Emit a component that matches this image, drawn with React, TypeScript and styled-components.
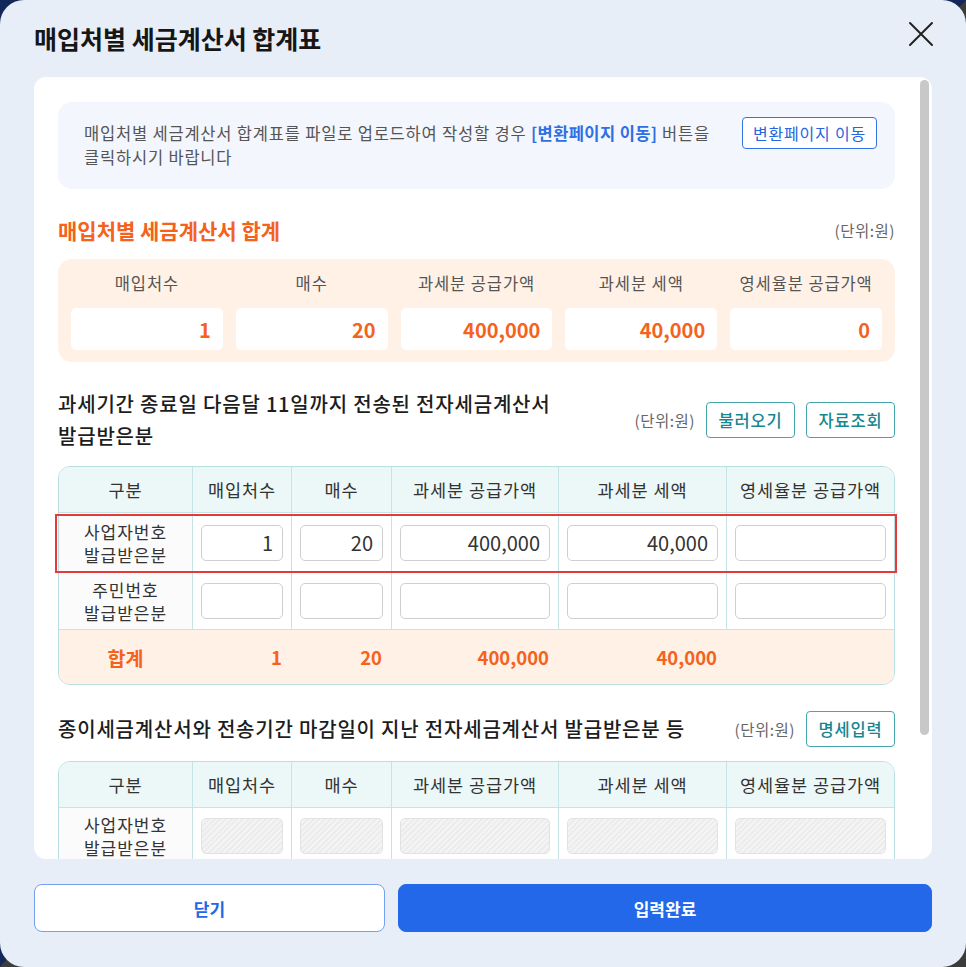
import React from "react";
import styled, { createGlobalStyle } from "styled-components";

const GlobalStyle = createGlobalStyle`
  * { box-sizing: border-box; }
  html, body {
    margin: 0;
    padding: 0;
    background: linear-gradient(135deg, #12275a 0%, #12275a 50%, #3c3c3c 50%, #3c3c3c 100%);
    font-family: "Noto Sans CJK KR", "Noto Sans", sans-serif;
    word-break: keep-all;
  }
`;

const columns = ["구분", "매입처수", "매수", "과세분 공급가액", "과세분 세액", "영세율분 공급가액"];

interface Row {
  label: [string, string];
  values: string[];
  highlight?: boolean;
}

const issuedRows: Row[] = [
  { label: ["사업자번호", "발급받은분"], values: ["1", "20", "400,000", "40,000", ""], highlight: true },
  { label: ["주민번호", "발급받은분"], values: ["", "", "", "", ""] },
];

const summary = [
  { title: "매입처수", value: "1" },
  { title: "매수", value: "20" },
  { title: "과세분 공급가액", value: "400,000" },
  { title: "과세분 세액", value: "40,000" },
  { title: "영세율분 공급가액", value: "0" },
];

const App: React.FC = () => {
  return (
    <>
      <GlobalStyle />
      <Modal>
        <ModalHeader>
          <ModalTitle>매입처별 세금계산서 합계표</ModalTitle>
          <CloseButton aria-label="닫기">
            <svg width="26" height="26" viewBox="0 0 26 26">
              <path d="M2 2 L24 24 M24 2 L2 24" stroke="#222" strokeWidth="2" strokeLinecap="round" />
            </svg>
          </CloseButton>
        </ModalHeader>

        <Panel>
          <PanelScroll>
            <InfoBox>
              <InfoText>
                매입처별 세금계산서 합계표를 파일로 업로드하여 작성할 경우 <InfoLink>[변환페이지 이동]</InfoLink> 버튼을
                클릭하시기 바랍니다
              </InfoText>
              <OutlineButton>변환페이지 이동</OutlineButton>
            </InfoBox>

            <SectionHead>
              <SectionTitle tone="orange">매입처별 세금계산서 합계</SectionTitle>
              <Unit>(단위:원)</Unit>
            </SectionHead>

            <SummaryBox>
              {summary.map((s) => (
                <SummaryCol key={s.title}>
                  <SummaryLabel>{s.title}</SummaryLabel>
                  <SummaryValue>{s.value}</SummaryValue>
                </SummaryCol>
              ))}
            </SummaryBox>

            <SectionHead spaced>
              <SectionTitle>과세기간 종료일 다음달 11일까지 전송된 전자세금계산서 발급받은분</SectionTitle>
              <HeadActions>
                <Unit>(단위:원)</Unit>
                <TealButton>불러오기</TealButton>
                <TealButton>자료조회</TealButton>
              </HeadActions>
            </SectionHead>

            <Table>
              <HeaderRow>
                {columns.map((c) => (
                  <HeadCell key={c}>{c}</HeadCell>
                ))}
              </HeaderRow>
              {issuedRows.map((r) => (
                <BodyRow key={r.label[0]} highlight={r.highlight}>
                  <LabelCell>
                    {r.label[0]}
                    <br />
                    {r.label[1]}
                  </LabelCell>
                  {r.values.map((v, i) => (
                    <InputCell key={i}>
                      <NumInput defaultValue={v} />
                    </InputCell>
                  ))}
                </BodyRow>
              ))}
              <TotalRow>
                <TotalLabel>합계</TotalLabel>
                <TotalValue>1</TotalValue>
                <TotalValue>20</TotalValue>
                <TotalValue>400,000</TotalValue>
                <TotalValue>40,000</TotalValue>
                <TotalValue />
              </TotalRow>
            </Table>

            <SectionHead spaced>
              <SectionTitle>종이세금계산서와 전송기간 마감일이 지난 전자세금계산서 발급받은분 등</SectionTitle>
              <HeadActions>
                <Unit>(단위:원)</Unit>
                <TealButton>명세입력</TealButton>
              </HeadActions>
            </SectionHead>

            <Table>
              <HeaderRow>
                {columns.map((c) => (
                  <HeadCell key={c}>{c}</HeadCell>
                ))}
              </HeaderRow>
              {issuedRows.map((r) => (
                <BodyRow key={r.label[0]}>
                  <LabelCell>
                    {r.label[0]}
                    <br />
                    {r.label[1]}
                  </LabelCell>
                  {r.values.map((_, i) => (
                    <InputCell key={i}>
                      <NumInput disabled />
                    </InputCell>
                  ))}
                </BodyRow>
              ))}
              <TotalRow>
                <TotalLabel>합계</TotalLabel>
                <TotalValue />
                <TotalValue />
                <TotalValue />
                <TotalValue />
                <TotalValue />
              </TotalRow>
            </Table>
          </PanelScroll>
          <ScrollThumb />
        </Panel>

        <Footer>
          <FooterButton>닫기</FooterButton>
          <FooterButton primary>입력완료</FooterButton>
        </Footer>
      </Modal>
    </>
  );
};

export default App;

const Modal = styled.div`
  width: 100%;
  height: 967px;
  background: #e8eef8;
  border-radius: 24px;
  display: flex;
  flex-direction: column;
  padding: 0 34px 35px 34px;
  overflow: hidden;
`;

const ModalHeader = styled.div`
  height: 77px;
  flex-shrink: 0;
  display: flex;
  align-items: center;
  justify-content: space-between;
`;

const ModalTitle = styled.h1`
  margin: 0;
  font-size: 25px;
  font-weight: 700;
  color: #161616;
  line-height: 1.3;
`;

const CloseButton = styled.button`
  border: none;
  background: none;
  padding: 0;
  margin: -10px -2px 0 0;
  width: 26px;
  height: 26px;
  cursor: pointer;
  display: flex;
`;

const Panel = styled.div`
  position: relative;
  flex: 1;
  min-height: 0;
  background: #fff;
  border-radius: 12px;
  overflow: hidden;
`;

const PanelScroll = styled.div`
  height: 100%;
  overflow: hidden;
  padding: 25px 37px 24px 24px;
`;

const ScrollThumb = styled.div`
  position: absolute;
  top: 3px;
  right: 3px;
  width: 9px;
  height: 655px;
  border-radius: 5px;
  background: #c8c8c8;
`;

const InfoBox = styled.div`
  display: flex;
  align-items: flex-start;
  gap: 20px;
  background: #f3f6fc;
  border-radius: 14px;
  padding: 15px 18px 20px 26px;
`;

const InfoText = styled.p`
  flex: 1;
  margin: 4px 0 0;
  font-size: 16.5px;
  letter-spacing: 0.8px;
  line-height: 24px;
  color: #555;
`;

const InfoLink = styled.span`
  color: #2e6fe3;
  font-weight: 700;
  letter-spacing: 0.4px;
`;

const OutlineButton = styled.button`
  flex-shrink: 0;
  height: 32px;
  width: 135px;
  border: 1px solid #3273e6;
  border-radius: 4px;
  background: #fff;
  color: #2566de;
  font-family: inherit;
  font-size: 16px;
  letter-spacing: 0.8px;
  padding: 0;
`;

const SectionHead = styled.div<{ spaced?: boolean }>`
  display: flex;
  align-items: center;
  justify-content: space-between;
  gap: 20px;
  margin: ${({ spaced }) => (spaced ? "26px 0 14px" : "24px 0 12px")};
`;

const SectionTitle = styled.h2<{ tone?: "orange" }>`
  flex: 1;
  margin: 0;
  font-size: ${({ tone }) => (tone ? "21px" : "20px")};
  line-height: ${({ tone }) => (tone ? "34px" : "32px")};
  font-weight: ${({ tone }) => (tone ? 700 : 500)};
  letter-spacing: ${({ tone }) => (tone ? "0" : "0.8px")};
  color: ${({ tone }) => (tone ? "#f4621c" : "#1d1d1d")};
`;

const Unit = styled.span`
  font-size: 15.5px;
  letter-spacing: 0.5px;
  color: #666;
  white-space: nowrap;
`;

const HeadActions = styled.div`
  display: flex;
  align-items: center;
  gap: 11px;
  flex-shrink: 0;
`;

const TealButton = styled.button`
  width: 89px;
  height: 36px;
  border: 1.5px solid #46a6ad;
  border-radius: 4px;
  background: #fff;
  color: #16868f;
  font-family: inherit;
  font-size: 16.5px;
  letter-spacing: 0.8px;
  font-weight: 500;
  padding: 0;
`;

const SummaryBox = styled.div`
  display: grid;
  grid-template-columns: repeat(5, 1fr);
  gap: 13px;
  background: #fff1e6;
  border-radius: 14px;
  padding: 13px 13px 12px;
`;

const SummaryCol = styled.div`
  display: flex;
  flex-direction: column;
  gap: 14px;
`;

const SummaryLabel = styled.div`
  text-align: center;
  font-size: 16.5px;
  letter-spacing: 0.9px;
  line-height: 22px;
  color: #555;
`;

const SummaryValue = styled.div`
  height: 42px;
  background: #fff;
  border-radius: 5px;
  display: flex;
  align-items: center;
  justify-content: flex-end;
  padding-right: 12px;
  font-size: 20px;
  font-weight: 700;
  color: #f4621c;
`;

const Table = styled.div`
  border: 1px solid #b9dfe2;
  border-radius: 12px;
`;

const gridCols = "133px 99px 100px 167px 168px 1fr";

const HeaderRow = styled.div`
  display: grid;
  grid-template-columns: ${gridCols};
  height: 46px;
  background: #ecf7f7;
  border-radius: 11px 11px 0 0;
  border-bottom: 1px solid #c6e4e6;
`;

const HeadCell = styled.div`
  display: flex;
  align-items: center;
  justify-content: center;
  font-size: 17.5px;
  letter-spacing: 0.9px;
  color: #333;
  & + & {
    border-left: 1px solid #c6e4e6;
  }
`;

const BodyRow = styled.div<{ highlight?: boolean }>`
  position: relative;
  display: grid;
  grid-template-columns: ${gridCols};
  height: ${({ highlight }) => (highlight ? "60px" : "57px")};
  border-bottom: 1px solid #c6e4e6;

  ${({ highlight }) =>
    highlight &&
    `
    &::after {
      content: "";
      position: absolute;
      top: 1px;
      left: -4px;
      right: -3px;
      bottom: -1px;
      border: 2px solid #e63a3a;
      pointer-events: none;
    }
  `}
`;

const LabelCell = styled.div`
  display: flex;
  align-items: center;
  justify-content: center;
  text-align: center;
  font-size: 17px;
  letter-spacing: 1px;
  line-height: 23px;
  color: #333;
  background: #fbfbfb;
`;

const InputCell = styled.div`
  display: flex;
  align-items: center;
  padding: 0 8px;
  border-left: 1px solid #c6e4e6;
`;

const NumInput = styled.input`
  width: 100%;
  height: 36px;
  border: 1px solid #cfcfcf;
  border-radius: 5px;
  background: #fff;
  text-align: right;
  padding: 0 9px;
  font-family: inherit;
  font-size: 20px;
  color: #333;
  outline: none;

  &:disabled {
    border-color: #e2e2e2;
    background: repeating-linear-gradient(
      135deg,
      #ececec 0px,
      #ececec 2px,
      #f4f4f4 2px,
      #f4f4f4 4px
    );
  }
`;

const TotalRow = styled.div`
  display: grid;
  grid-template-columns: ${gridCols};
  height: 54px;
  background: #fff1e6;
  border-radius: 0 0 11px 11px;
`;

const TotalLabel = styled.div`
  display: flex;
  align-items: center;
  justify-content: center;
  font-size: 19.5px;
  font-weight: 700;
  color: #f4621c;
`;

const TotalValue = styled.div`
  display: flex;
  align-items: center;
  justify-content: flex-end;
  padding-right: 9px;
  font-size: 18.5px;
  font-weight: 700;
  color: #f4621c;
`;

const Footer = styled.div`
  display: grid;
  grid-template-columns: 351px 1fr;
  gap: 13px;
  margin-top: 25px;
  flex-shrink: 0;
`;

const FooterButton = styled.button<{ primary?: boolean }>`
  height: 48px;
  border-radius: 8px;
  border: 1.5px solid ${({ primary }) => (primary ? "#2368e8" : "#74a0ef")};
  background: ${({ primary }) => (primary ? "#2368e8" : "#fff")};
  color: ${({ primary }) => (primary ? "#fff" : "#2368e8")};
  font-family: inherit;
  font-size: 17px;
  font-weight: 700;
  cursor: pointer;
`;
